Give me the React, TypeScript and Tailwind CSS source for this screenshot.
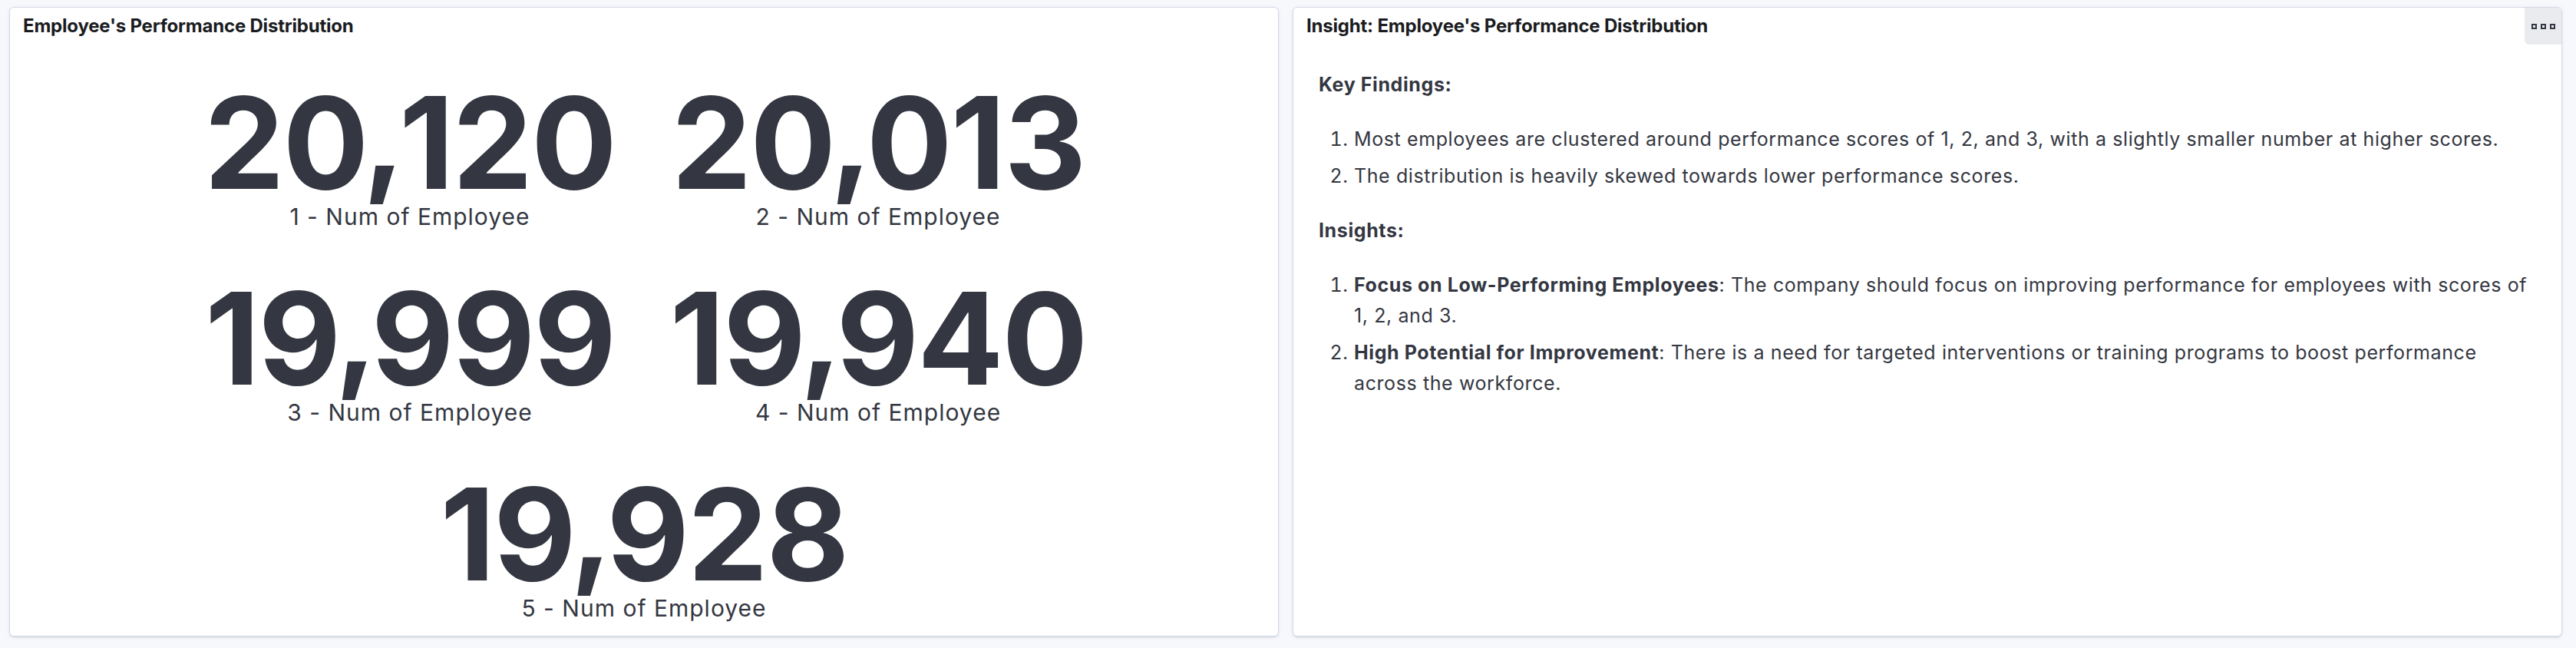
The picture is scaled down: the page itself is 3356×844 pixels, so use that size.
import React from 'react';

const metrics = [
  { value: '20,120', label: '1 - Num of Employee' },
  { value: '20,013', label: '2 - Num of Employee' },
  { value: '19,999', label: '3 - Num of Employee' },
  { value: '19,940', label: '4 - Num of Employee' },
  { value: '19,928', label: '5 - Num of Employee' },
];

const font = { fontFamily: 'Inter, "Noto Sans", sans-serif' };

const Panel: React.FC<{ title: string; children: React.ReactNode; menu?: boolean }> = ({ title, children, menu }) => (
  <section className="relative flex-1 flex flex-col bg-white border border-[#d3dae6] rounded-md shadow-[0_2px_3px_-1px_rgba(152,162,179,0.35),0_1px_6px_-2px_rgba(152,162,179,0.3)]">
    <header className="pt-[8px] px-[17px] h-[48px] shrink-0">
      <h2 className="text-[24px] leading-[32px] font-bold text-[#1a1c21] tracking-[-0.2px]">{title}</h2>
    </header>
    {menu && (
      <button className="absolute top-0 right-0 w-[48px] h-[48px] bg-[#e9ebef] rounded-tr-md rounded-bl-md flex items-center justify-center gap-[5px]">
        <span className="w-[7px] h-[7px] border-2 border-[#343741]" />
        <span className="w-[7px] h-[7px] border-2 border-[#343741]" />
        <span className="w-[7px] h-[7px] border-2 border-[#343741]" />
      </button>
    )}
    {children}
  </section>
);

// the comma in this font hangs lower than the reference one, so lift it a bit
const MetricValue: React.FC<{ value: string }> = ({ value }) => {
  const [head, tail] = value.split(',');
  return (
    <div className="text-[166px] leading-[163px] font-bold tracking-[-2px]">
      {head}
      <span className="inline-block -mx-[6px] -translate-y-[12px]">,</span>
      {tail}
    </div>
  );
};

export default function App() {
  return (
    <div className="w-[3356px] h-[844px] bg-[#f7f8fc] flex gap-[18px] pl-[12px] pr-[18px] pt-[9px] pb-[15px]" style={font}>
      <Panel title="Employee's Performance Distribution">
        {/* metric grid */}
        <div className="flex flex-wrap justify-center content-start gap-y-[62px] pt-[46px] text-[#343741]">
          {metrics.map((m) => (
            <div key={m.value} className="w-[610px] flex flex-col items-center">
              <MetricValue value={m.value} />
              <div className="text-[30px] leading-[30px] tracking-[1px]">{m.label}</div>
            </div>
          ))}
        </div>
      </Panel>

      <Panel title="Insight: Employee's Performance Distribution" menu>
        <div className="pt-[32px] pl-[33px] pr-[36px] text-[25px] leading-[40px] tracking-[0.6px] text-[#343741]">
          <h3 className="font-bold mb-[31px]">Key Findings:</h3>
          <ol className="list-decimal pl-[46px] mb-[31px]">
            <li className="mb-[8px]">Most employees are clustered around performance scores of 1, 2, and 3, with a slightly smaller number at higher scores.</li>
            <li className="mb-[8px]">The distribution is heavily skewed towards lower performance scores.</li>
          </ol>
          <h3 className="font-bold mb-[31px]">Insights:</h3>
          <ol className="list-decimal pl-[46px]">
            <li className="mb-[8px]">
              <strong className="font-bold">Focus on Low-Performing Employees</strong>: The company should focus on improving performance for employees with scores of 1, 2, and 3.
            </li>
            <li className="mb-[8px]">
              <strong className="font-bold">High Potential for Improvement</strong>: There is a need for targeted interventions or training programs to boost performance across the workforce.
            </li>
          </ol>
        </div>
      </Panel>
    </div>
  );
}
